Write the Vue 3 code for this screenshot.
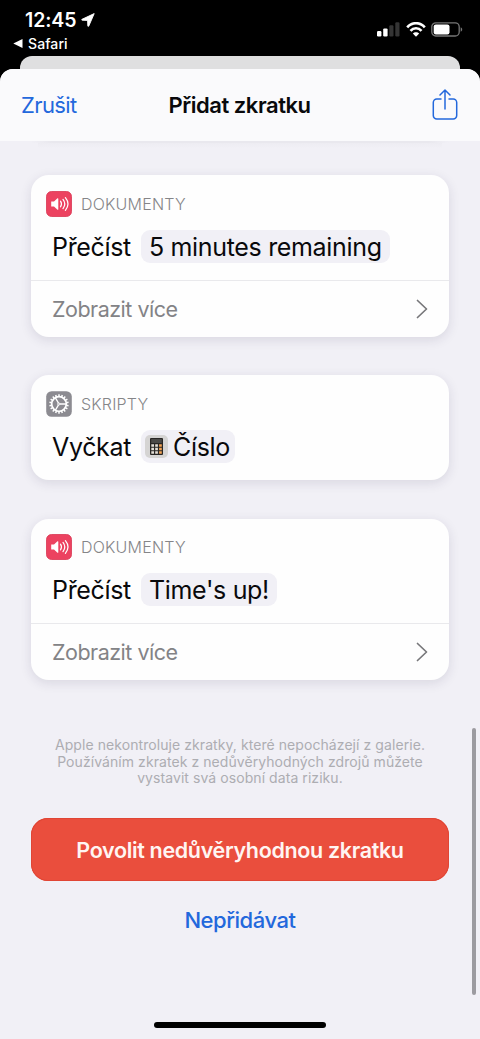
<script setup>
const cards = [
  { kind: 'sound', app: 'DOKUMENTY', action: 'Přečíst', value: '5 minutes remaining', tone: 'long', more: true },
  { kind: 'gear', app: 'SKRIPTY', action: 'Vyčkat', value: 'Číslo', tone: 'number', more: false },
  { kind: 'sound', app: 'DOKUMENTY', action: 'Přečíst', value: "Time's up!", tone: 'short', more: true },
]
const teeth = Array.from({ length: 18 }, (_, i) => i * 20)
</script>

<template>
  <div class="screen">
    <header class="status">
      <div class="status-left">
        <div class="clock">
          <span class="time">12:45</span>
          <svg class="arrow" width="14" height="14" viewBox="0 0 14 14"><path d="M13.200.6 1 6.300c-.5.3-.4.900.2.900l5.400.2.200 5.400c0 .7.700.8 1 .2z" fill="#fff" stroke="#fff" stroke-width=".9" stroke-linejoin="round" /></svg>
        </div>
        <div class="back">
          <svg width="10" height="9" viewBox="0 0 10 9"><path d="M9.500 0v9L.3 4.500z" fill="#fff" /></svg>
          <span>Safari</span>
        </div>
      </div>
      <div class="indicators">
        <svg width="23" height="15" viewBox="0 0 23 15">
          <rect x="0" y="9" width="4.4" height="5.5" rx="1.2" fill="#fff" />
          <rect x="6.2" y="6.4" width="4.4" height="8.1" rx="1.2" fill="#fff" />
          <rect x="12.3" y="3.2" width="4.2" height="11.3" rx="1.2" fill="#353535" />
          <rect x="18.3" y="0.3" width="4.2" height="14.2" rx="1.2" fill="#353535" />
        </svg>
        <svg width="20" height="15" viewBox="0 0 20 15" fill="none" stroke="#fff" stroke-width="2.6">
          <path d="M1.2 5.3C6-.2 14-.2 18.8 5.3" />
          <path d="M4.5 8.8c3-3.4 8-3.4 11 0" />
          <path d="M10 14.8 6.8 11.5c1.7-1.8 4.7-1.8 6.4 0z" fill="#fff" stroke="none" />
        </svg>
        <svg width="32" height="15" viewBox="0 0 32 15">
          <rect x=".8" y=".8" width="27.4" height="13.2" rx="4" fill="none" stroke="#777" stroke-width="1.3" />
          <rect x="2.7" y="2.4" width="15.8" height="10" rx="2.2" fill="#fff" />
          <path d="M29.7 5.2v4.5c2-.8 2-3.7 0-4.5z" fill="#777" />
        </svg>
      </div>
    </header>
    <div class="sheet-behind"></div>
    <section class="sheet">
      <nav class="navbar">
        <span class="cancel">Zrušit</span>
        <span class="title">Přidat zkratku</span>
        <svg class="share" width="26" height="32" viewBox="0 0 26 32" fill="none" stroke="#2368dc" stroke-width="1.5" stroke-linecap="round" stroke-linejoin="round">
          <path d="M9 10H4.800A3.500 3.500 0 0 0 1.300 13.500v13A3.500 3.500 0 0 0 4.800 30h16.400a3.500 3.500 0 0 0 3.500-3.500v-13A3.500 3.500 0 0 0 21.200 10H17" />
          <path d="M13 20V1M8 6l5-5 5 5" />
        </svg>
      </nav>
      <main class="content">
        <article v-for="(card, i) in cards" :key="i" class="card">
          <div class="card-main">
            <div class="app-row">
              <svg v-if="card.kind === 'sound'" width="26" height="26" viewBox="0 0 26 26">
                <rect x=".5" y=".5" width="25" height="25" rx="5" fill="#ec4260" stroke="#d93652" stroke-width=".8" />
                <path d="M5.200 10.500h2.800l3.500-3.200c.4-.3.800-.1.800.4v10.600c0 .5-.4.700-.8.400L8 15.600H5.200z" fill="#fff" />
                <path d="M14.500 10.200c1.200 1.700 1.200 3.900 0 5.600M17 8.400c2.200 2.800 2.200 6.400 0 9.200M19.400 6.700c3.200 3.900 3.200 8.700 0 12.600" fill="none" stroke="#fff" stroke-width="1.25" stroke-linecap="round" />
              </svg>
              <svg v-else width="26" height="26" viewBox="0 0 26 26">
                <rect x=".2" y=".2" width="25.600" height="25.600" rx="5.400" fill="#8c8b91" />
                <g fill="none" stroke="#fff">
                  <circle cx="13" cy="13" r="7.300" stroke-width="1.700" />
                  <path v-for="angle in teeth" :key="angle" d="M13 3.300v2.300" stroke-width="1.500" :transform="`rotate(${angle} 13 13)`" />
                  <path d="M13.700 13h6.600M12.500 12.200 9.300 6.700M12.500 13.800l-3.200 5.500" stroke-width="1.300" />
                  <circle cx="12.800" cy="13" r="1.100" stroke-width="1" />
                </g>
              </svg>
              <span class="app-name">{{ card.app }}</span>
            </div>
            <div class="action-row">
              <span class="action">{{ card.action }}</span>
              <span class="token" :class="card.tone">
                <svg v-if="card.tone === 'number'" width="23" height="23" viewBox="0 0 23 23">
                  <rect width="23" height="23" rx="5" fill="#d5d4d3" />
                  <rect x="5" y="3" width="13" height="17" rx="1" fill="#292725" />
                  <rect x="6.200" y="4" width="10.600" height="4" fill="#4b4a48" />
                  <g fill="#e4e0d8">
                    <path d="M6.300 9.300h2.700v2.500H6.300zM10.200 9.300h2.700v2.500h-2.700zM6.300 12.800h2.700v2.500H6.300zM10.200 12.800h2.700v2.500h-2.700zM6.300 16.300h2.700v2.500H6.300zM10.200 16.300h2.700v2.500h-2.700z" />
                  </g>
                  <path d="M14.100 9.300h2.700v2.500h-2.700zM14.100 12.800h2.700v2.500h-2.700zM14.100 16.300h2.700v2.500h-2.700z" fill="#f4a455" />
                </svg>
                <span>{{ card.value }}</span>
              </span>
            </div>
          </div>
          <div v-if="card.more" class="more-row">
            <span>Zobrazit více</span>
            <svg width="12" height="20" viewBox="0 0 12 20"><path d="m1.500 1.500 9 8.500-9 8.500" fill="none" stroke="#77777a" stroke-width="1.700" stroke-linecap="round" stroke-linejoin="round" /></svg>
          </div>
        </article>
        <p class="notice">
          <span>Apple nekontroluje zkratky, které nepocházejí z galerie.</span>
          <span>Používáním zkratek z nedůvěryhodných zdrojů můžete</span>
          <span>vystavit svá osobní data riziku.</span>
        </p>
        <button class="allow"><span>Povolit nedůvěryhodnou zkratku</span></button>
        <button class="deny"><span>Nepřidávat</span></button>
      </main>
    </section>
    <div class="scrollbar"></div>
    <div class="home"></div>
  </div>
</template>

<style>
html, body { margin: 0; background: #000; }
</style>

<style scoped>
.screen { position: relative; width: 480px; height: 1039px; overflow: hidden; background: #000; font-family: Inter, "Liberation Sans", sans-serif; color: #09090b; display: flex; flex-direction: column; white-space: nowrap; }
.status { height: 56px; flex: none; display: flex; justify-content: space-between; color: #fff; }
.status-left { padding: 8px 0 0 13px; }
.clock { display: flex; align-items: center; height: 23px; padding-left: 12px; gap: 5px; }
.time { font-size: 19.5px; font-weight: 600; letter-spacing: -.1px; }
.back { display: flex; align-items: center; height: 24px; gap: 5px; font-size: 14px; font-weight: 500; letter-spacing: .1px; }
.indicators { display: flex; gap: 5px; padding: 22px 17px 0 0; }
.indicators svg:first-child { margin-right: 1px; margin-left: -3px; }
.sheet-behind { height: 13px; flex: none; margin: 0 20px; background: #dfdfe0; border-radius: 12px 12px 0 0; }
.sheet { flex: 1; background: #f1f0f6; border-radius: 13px 13px 0 0; overflow: hidden; }
.navbar { height: 72px; background: #fafafc; display: flex; align-items: center; justify-content: space-between; padding: 0 22px 0 21px; }
.cancel, .title { font-size: 22px; }
.cancel { width: 130px; color: #2368dc; letter-spacing: -.6px; }
.title { font-weight: 600; letter-spacing: -.45px; }
.share { margin-left: 104px; }
/* tail of the shadow cast by the card scrolled under the bar */
.content { padding: 34px 31px 0; display: flex; flex-direction: column; background: linear-gradient(90deg, #f1f0f6, #e9e8ee 5%, #e9e8ee 95%, #f1f0f6) center top / 418px 2px no-repeat, linear-gradient(#edecf2, #f1f0f6) center 2px / 404px 5px no-repeat; }
.card { background: #fefefe; border-radius: 18px; box-shadow: 0 3px 12px rgba(40, 35, 70, .12); margin-bottom: 38px; }
.card:nth-child(2) { margin-bottom: 38.5px; }
.card-main { height: 105px; box-sizing: border-box; padding: 15.5px 15px 0; }
.card:nth-child(3) .card-main { height: 104.5px; padding-top: 15px; }
.app-row { height: 26px; display: flex; align-items: center; gap: 9px; }
.app-name { font-size: 16px; color: #858588; font-weight: 300; letter-spacing: .2px; }
.action-row { display: flex; align-items: center; padding: 13px 0 0 6px; font-size: 25px; height: 34px; gap: 10px; letter-spacing: -.33px; }
.token { height: 33px; border-radius: 9px; background: #f1f0f6; display: flex; align-items: center; padding: 0 8px; }
.number { padding: 0 5px 0 4px; gap: 5px; }
.more-row { border-top: 1px solid #e9e9ec; height: 56px; padding: 0 21px; display: flex; align-items: center; justify-content: space-between; color: #838386; font-size: 21.5px; letter-spacing: -.5px; }
.notice { margin: 19px 0 0; display: flex; flex-direction: column; align-items: center; font-size: 14px; line-height: 16.7px; color: #adadb2; letter-spacing: .07px; }
.allow, .deny { font-family: inherit; border: 0; padding: 0; }
.allow { margin-top: 31px; height: 63px; border-radius: 17px; background: #ea4e3d; box-shadow: inset 0 0 0 1px #e04534; color: #fff5f2; font-size: 21.5px; font-weight: 600; letter-spacing: -.34px; }
.deny { height: 78px; background: none; color: #2368dc; font-size: 22px; font-weight: 500; letter-spacing: -.45px; }
.scrollbar { position: absolute; left: 472px; top: 728px; width: 4px; height: 267px; border-radius: 2px; background: #9c9ba0; }
.home { position: absolute; left: 154px; top: 1022px; width: 172px; height: 6px; border-radius: 3px; background: #000; }
</style>
